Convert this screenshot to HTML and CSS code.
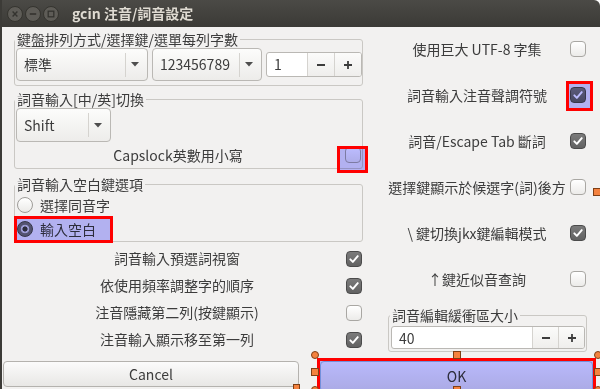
FILE: index.html
```html
<!DOCTYPE html>
<html lang="zh-Hant">
<head>
  <meta charset="UTF-8">
  <meta name="viewport" content="width=device-width, initial-scale=1.0">
  <title>gcin 注音/詞音設定</title>
  <link rel="stylesheet" href="styles.css">
</head>
<body>
  <div class="window">
    <!-- Title bar -->
    <header class="titlebar">
      <svg class="wm-btn" viewBox="0 0 16 16"><circle cx="8" cy="8" r="7.5" fill="#5e5c57" stroke="#35342f"/><path d="M5.6 5.6l4.8 4.8M10.4 5.6l-4.8 4.8" stroke="#34332f" stroke-width="1.4"/></svg>
      <svg class="wm-btn" viewBox="0 0 16 16"><circle cx="8" cy="8" r="7.5" fill="#5e5c57" stroke="#35342f"/><path d="M4.8 8h6.4" stroke="#34332f" stroke-width="1.6"/></svg>
      <svg class="wm-btn" viewBox="0 0 16 16"><circle cx="8" cy="8" r="7.5" fill="#5e5c57" stroke="#35342f"/><rect x="5.2" y="5.2" width="5.6" height="5.6" fill="none" stroke="#34332f" stroke-width="1.3"/></svg>
      <span class="title">gcin 注音/詞音設定</span>
    </header>

    <main class="content">
      <div class="columns">
        <!-- Left column -->
        <section class="col-left">
          <fieldset class="frame frame-kbd">
            <legend>鍵盤排列方式/選擇鍵/選單每列字數</legend>
            <div class="combo-row">
              <div class="combo combo-kbd">
                <span class="combo-text">標準</span>
                <span class="combo-arrow"><svg width="8" height="5" viewBox="0 0 8 5"><path d="M0 0h8L4 4.5z" fill="#4e4e4e"/></svg></span>
              </div>
              <div class="combo combo-sel">
                <span class="combo-text">123456789</span>
                <span class="combo-arrow"><svg width="8" height="5" viewBox="0 0 8 5"><path d="M0 0h8L4 4.5z" fill="#4e4e4e"/></svg></span>
              </div>
              <div class="spin spin-small">
                <span class="spin-entry">1</span>
                <span class="spin-btn"><svg width="10" height="10" viewBox="0 0 10 10"><path d="M1 5h8" stroke="#3c3c3c" stroke-width="1.8"/></svg></span>
                <span class="spin-btn"><svg width="10" height="10" viewBox="0 0 10 10"><path d="M1 5h8M5 1v8" stroke="#3c3c3c" stroke-width="1.8"/></svg></span>
              </div>
            </div>
          </fieldset>

          <fieldset class="frame frame-switch">
            <legend>詞音輸入[中/英]切換</legend>
            <div class="combo combo-shift">
              <span class="combo-text">Shift</span>
              <span class="combo-arrow"><svg width="8" height="5" viewBox="0 0 8 5"><path d="M0 0h8L4 4.5z" fill="#4e4e4e"/></svg></span>
            </div>
            <div class="check-row caps-row">
              <span class="check-label">Capslock英數用小寫</span>
              <span class="check"></span>
            </div>
          </fieldset>

          <fieldset class="frame frame-space">
            <legend>詞音輸入空白鍵選項</legend>
            <div class="radio-row"><span class="radio"></span><span>選擇同音字</span></div>
            <div class="radio-row"><span class="radio on"></span><span>輸入空白</span></div>
          </fieldset>

          <div class="left-checks">
            <div class="check-row">
              <span class="check-label">詞音輸入預選詞視窗</span>
              <span class="check on"><svg viewBox="0 0 16 16"><path d="M3.8 8.4l2.9 2.9 5.6-6.6" fill="none" stroke="#fff" stroke-width="2.2" stroke-linecap="round" stroke-linejoin="round"/></svg></span>
            </div>
            <div class="check-row">
              <span class="check-label">依使用頻率調整字的順序</span>
              <span class="check on"><svg viewBox="0 0 16 16"><path d="M3.8 8.4l2.9 2.9 5.6-6.6" fill="none" stroke="#fff" stroke-width="2.2" stroke-linecap="round" stroke-linejoin="round"/></svg></span>
            </div>
            <div class="check-row">
              <span class="check-label">注音隱藏第二列(按鍵顯示)</span>
              <span class="check"></span>
            </div>
            <div class="check-row">
              <span class="check-label">注音輸入顯示移至第一列</span>
              <span class="check on"><svg viewBox="0 0 16 16"><path d="M3.8 8.4l2.9 2.9 5.6-6.6" fill="none" stroke="#fff" stroke-width="2.2" stroke-linecap="round" stroke-linejoin="round"/></svg></span>
            </div>
          </div>
        </section>

        <!-- Right column -->
        <section class="col-right">
          <div class="check-row right-row">
            <span class="check-label">使用巨大 UTF-8 字集</span>
            <span class="check"></span>
          </div>
          <div class="check-row right-row">
            <span class="check-label">詞音輸入注音聲調符號</span>
            <span class="check on"><svg viewBox="0 0 16 16"><path d="M3.8 8.4l2.9 2.9 5.6-6.6" fill="none" stroke="#fff" stroke-width="2.2" stroke-linecap="round" stroke-linejoin="round"/></svg></span>
          </div>
          <div class="check-row right-row">
            <span class="check-label">詞音/Escape Tab 斷詞</span>
            <span class="check on"><svg viewBox="0 0 16 16"><path d="M3.8 8.4l2.9 2.9 5.6-6.6" fill="none" stroke="#fff" stroke-width="2.2" stroke-linecap="round" stroke-linejoin="round"/></svg></span>
          </div>
          <div class="check-row right-row">
            <span class="check-label">選擇鍵顯示於候選字(詞)後方</span>
            <span class="check"></span>
          </div>
          <div class="check-row right-row">
            <span class="check-label">\ 鍵切換jkx鍵編輯模式</span>
            <span class="check on"><svg viewBox="0 0 16 16"><path d="M3.8 8.4l2.9 2.9 5.6-6.6" fill="none" stroke="#fff" stroke-width="2.2" stroke-linecap="round" stroke-linejoin="round"/></svg></span>
          </div>
          <div class="check-row right-row">
            <span class="check-label">↑鍵近似音查詢</span>
            <span class="check"></span>
          </div>

          <fieldset class="frame frame-buffer">
            <legend>詞音編輯緩衝區大小</legend>
            <div class="spin spin-big">
              <span class="spin-entry">40</span>
              <span class="spin-btn"><svg width="10" height="10" viewBox="0 0 10 10"><path d="M1 5h8" stroke="#3c3c3c" stroke-width="1.8"/></svg></span>
              <span class="spin-btn"><svg width="10" height="10" viewBox="0 0 10 10"><path d="M1 5h8M5 1v8" stroke="#3c3c3c" stroke-width="1.8"/></svg></span>
            </div>
          </fieldset>
        </section>
      </div>

      <div class="buttons">
        <button class="btn btn-cancel">Cancel</button>
        <button class="btn btn-ok">OK</button>
      </div>
    </main>
  </div>

  <!-- Annotation marks drawn over the dialog -->
  <div class="mark mark-caps"></div>
  <div class="mark mark-tone"></div>
  <div class="mark mark-space"></div>
  <div class="mark mark-ok"></div>

  <span class="handle round h-ok-tl"></span>
  <span class="handle round h-ok-tr"></span>
  <span class="handle round h-ok-bl"></span>
  <span class="handle round h-ok-br"></span>
  <span class="handle h-ok-tm"></span>
  <span class="handle h-ok-ml"></span>
  <span class="handle h-ok-mr"></span>
  <span class="handle h-ok-bm"></span>
  <span class="handle h-cancel"></span>
  <span class="handle h-edge"></span>
</body>
</html>
```

FILE: styles.css
```css
/* Base */
* {
  box-sizing: border-box;
}
body {
  margin: 0;
  position: relative;
  width: 600px;
  height: 389px;
  overflow: hidden;
  background: #fff;
  font-family: "Noto Sans CJK TC", "Noto Sans", sans-serif;
  font-size: 14px;
  color: #3c3c3c;
}
.window {
  width: 600px;
  height: 389px;
  display: flex;
  flex-direction: column;
  background: #f2f1f0;
  border-left: 2px solid #3c3b37;
  border-top-right-radius: 6px;
  overflow: hidden;
}

/* Title bar */
.titlebar {
  flex: none;
  height: 27px;
  display: flex;
  align-items: center;
  padding-left: 5px;
  background: linear-gradient(#4b4a46, #3b3a36);
}
.wm-btn {
  display: block;
  width: 16px;
  height: 16px;
  margin-right: 2px;
}
.title {
  margin-left: 11px;
  color: #dfdbd2;
  font-weight: 700;
  line-height: 17px;
}

/* Layout */
.content {
  flex: 1;
  display: flex;
  flex-direction: column;
}
.columns {
  height: 331px;
  display: flex;
}
.col-left {
  width: 349px;
  margin-left: 12px;
}
.col-right {
  width: 214px;
  margin-left: 23px;
  margin-top: -1px;
}

/* Frames */
.frame {
  margin: 0;
  padding: 0 0 0 1px;
  min-width: 0;
  border: 1px solid #cac8c4;
  border-radius: 3px;
}
.frame legend {
  padding: 0 2px;
  margin-left: -1px;
  line-height: 17px;
}
.frame-kbd {
  margin-top: 4px;
  padding-bottom: 4px;
}
.frame-switch {
  margin-top: 5px;
}
.frame-space {
  margin-top: 7px;
}
.frame-buffer {
  margin: 5px 0 0 2px;
  width: 199px;
  padding: 2px 1px 2px 2px;
}

/* Combo boxes */
.combo-row {
  display: flex;
  align-items: center;
  gap: 4px;
}
.combo {
  display: flex;
  align-items: center;
  height: 33px;
  border: 1px solid #bab8b4;
  border-radius: 4px;
  background: linear-gradient(#fcfcfb, #edecea);
}
.combo-kbd {
  width: 132px;
}
.combo-sel {
  width: 110px;
}
.combo-shift {
  width: 95px;
  height: 34px;
}
.combo-text {
  flex: 1;
  padding-left: 7px;
  line-height: 17px;
}
.combo-arrow {
  width: 22px;
  height: 24px;
  display: flex;
  align-items: center;
  padding-left: 5px;
  border-left: 1px solid #d5d3cf;
}
.combo-arrow svg {
  display: block;
}

/* Spin buttons */
.spin {
  display: flex;
  border: 1px solid #bab8b4;
  border-radius: 3px;
  background: #fff;
  overflow: hidden;
}
.spin-small {
  width: 96px;
  height: 25px;
}
.spin-big {
  width: 194px;
  height: 23px;
}
.spin-entry {
  flex: 1;
  padding-left: 7px;
  line-height: 23px;
}
.spin-btn {
  width: 27px;
  display: flex;
  align-items: center;
  justify-content: center;
  border-left: 1px solid #d5d3cf;
  background: linear-gradient(#fbfbfa, #efeeec);
}
.spin-big .spin-btn {
  width: 26px;
}

/* Check rows */
.check-row {
  display: flex;
  align-items: center;
  height: 27px;
}
.check-label {
  flex: 1;
  text-align: center;
  line-height: 17px;
  white-space: nowrap;
}
.caps-row {
  height: 26px;
}
.check {
  flex: none;
  width: 16px;
  height: 16px;
  margin: 0 1px 0 6px;
  border: 1px solid #a9a7a3;
  border-radius: 4px;
  background: linear-gradient(#fff, #ecebe9);
}
.caps-row .check {
  margin-left: 5px;
}
.check.on {
  border-color: #4b4b4b;
  background: linear-gradient(#7b7b7b, #626262);
}
.check svg {
  display: block;
  width: 14px;
  height: 14px;
}
.left-checks {
  margin-top: 3px;
}
.right-row {
  height: 46px;
}
.right-row .check-label {
  flex: none;
  width: 182px;
}
.right-row .check {
  margin: 0 0 0 2px;
}

/* Radio buttons */
.radio-row {
  display: flex;
  align-items: center;
  gap: 7px;
  height: 24px;
  padding-left: 1px;
  line-height: 17px;
}
.radio {
  width: 16px;
  height: 16px;
  border-radius: 50%;
  border: 1px solid #9e9c98;
  background: linear-gradient(#fff, #ebeae8);
}
.radio.on {
  border-color: #474747;
  background: radial-gradient(circle, #3c3c3c 0 2.3px, #d4d4d4 2.8px 4px, #707070 4.6px);
}

/* Dialog buttons */
.buttons {
  display: flex;
  align-items: flex-start;
  margin-top: 3px;
}
.btn {
  font: inherit;
  color: #3c3c3c;
  padding: 0;
  line-height: 17px;
  border: 1px solid #b4b2ae;
  border-radius: 4px;
  background: linear-gradient(#fbfbfb, #e8e7e5);
}
.btn-cancel {
  width: 296px;
  height: 26px;
  margin-left: 1px;
}
.btn-ok {
  width: 273px;
  height: 31px;
  margin-left: 21px;
  border-color: #9cc4dc;
}

/* Annotation marks */
.mark {
  position: absolute;
  border: 3px solid #f00;
}
.mark::before {
  content: "";
  position: absolute;
  inset: 0;
  background: #bcbcff;
  mix-blend-mode: multiply;
}
.mark-caps {
  left: 337px;
  top: 146px;
  width: 31px;
  height: 27px;
}
.mark-tone {
  left: 566px;
  top: 81px;
  width: 27px;
  height: 30px;
}
.mark-space {
  left: 14px;
  top: 216px;
  width: 99px;
  height: 27px;
}
.mark-ok {
  left: 317px;
  top: 358px;
  width: 279px;
  height: 36px;
}

/* Selection handles */
.handle {
  position: absolute;
  width: 8px;
  height: 8px;
  background: #f4823f;
  border: 1px solid #7e3f16;
}
.handle.round {
  border-radius: 50%;
}
.h-ok-tl { left: 311px; top: 351px; }
.h-ok-tr { left: 594px; top: 351px; }
.h-ok-bl { left: 311px; top: 386px; }
.h-ok-br { left: 594px; top: 386px; }
.h-ok-tm { left: 453px; top: 351px; }
.h-ok-ml { left: 311px; top: 368px; }
.h-ok-mr { left: 594px; top: 368px; }
.h-ok-bm { left: 453px; top: 386px; }
.h-cancel { left: 293px; top: 384px; width: 7px; height: 7px; }
.h-edge { left: 593px; top: 188px; }
```
